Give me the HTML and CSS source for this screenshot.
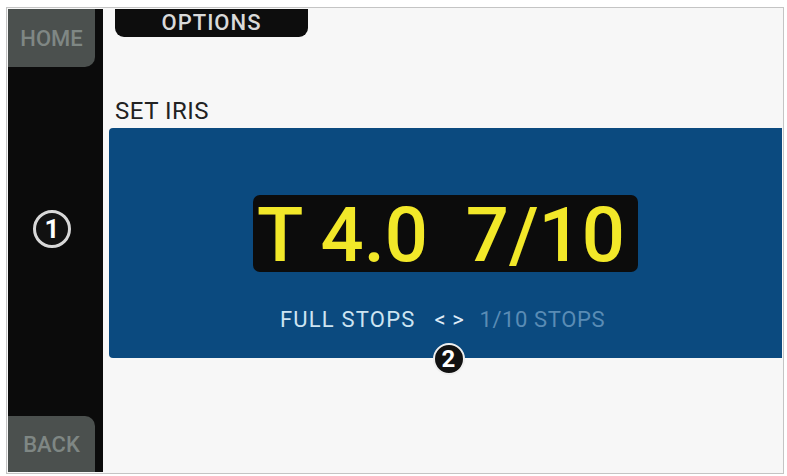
FILE: index.html
```html
<!DOCTYPE html>
<html lang="en">
<head>
  <meta charset="UTF-8">
  <title>Set Iris</title>
  <link rel="stylesheet" href="styles.css">
</head>
<body>
  <div class="screen">
    <!-- Soft keys on the left edge -->
    <aside class="side">
      <div class="soft-key home">HOME</div>
      <div class="marker marker-side">1</div>
      <div class="soft-key back">BACK</div>
    </aside>

    <main class="content">
      <div class="tab">OPTIONS</div>
      <div class="title">SET IRIS</div>

      <section class="panel">
        <div class="readout">T 4.0&nbsp;&nbsp;7/10</div>
        <div class="stops">
          <span class="on">FULL STOPS</span>
          <span class="arrows">&lt; &gt;</span>
          <span class="off">1/10 STOPS</span>
        </div>
        <div class="marker marker-panel">2</div>
      </section>
    </main>
  </div>
</body>
</html>
```

FILE: styles.css
```css
body {
  margin: 0;
  background: #ffffff;
  font-family: Roboto, "Liberation Sans", sans-serif;
}
.screen {
  box-sizing: border-box;
  display: flex;
  height: 467px;
  margin: 7px 3px 0 6px;
  padding: 1px;
  border: 1px solid #c4c4c4;
  background: #f7f7f7;
}

/* left column */
.side {
  width: 95px;
  flex-shrink: 0;
  display: flex;
  flex-direction: column;
  justify-content: space-between;
  align-items: flex-start;
  background: #0b0b0b;
}
.soft-key {
  width: 87px;
  height: 58px;
  display: flex;
  align-items: center;
  justify-content: center;
  background: #4b504e;
  color: #7f8784;
  font-size: 22px;
  font-weight: 500;
}
.home { border-bottom-right-radius: 10px; }
.back { height: 56px; border-top-right-radius: 10px; }

.marker {
  box-sizing: border-box;
  display: flex;
  align-items: center;
  justify-content: center;
  border-radius: 50%;
  background: #111111;
  border: 2px solid #eeeeee;
  color: #ffffff;
  font-weight: 700;
}
.marker-side {
  width: 38px;
  height: 38px;
  margin-left: 25px;
  margin-bottom: 26px;
  border: 3px solid #d8d8d8;
  font-size: 26px;
}
.marker-panel {
  position: absolute;
  left: calc(50% - 13px);
  bottom: -17px;
  width: 32px;
  height: 32px;
  font-size: 24px;
}

/* main area */
.content {
  flex: 1;
  display: flex;
  flex-direction: column;
  padding-left: 6px;
}
.tab {
  width: 193px;
  height: 28px;
  margin-left: 6px;
  background: #0d0d0d;
  border-radius: 0 0 9px 9px;
  color: #d9d9d9;
  font-size: 22px;
  font-weight: 500;
  line-height: 28px;
  text-align: center;
  letter-spacing: 1px;
}
.title {
  margin: 60px 0 3px 6px;
  color: #222222;
  font-size: 24px;
  line-height: 28px;
  letter-spacing: 0.5px;
}
.panel {
  position: relative;
  height: 230px;
  display: flex;
  flex-direction: column;
  align-items: center;
  background: #0b4a7f;
  border-radius: 4px 0 0 4px;
}
.readout {
  box-sizing: border-box;
  width: 385px;
  height: 77px;
  margin-top: 67px;
  padding: 4px 9px 0 0;
  background: #0c0c0c;
  border-radius: 7px;
  color: #f2e829;
  font-size: 76px;
  font-weight: 500;
  line-height: 73px;
  text-align: center;
}
.stops {
  display: flex;
  margin-top: 35px;
  margin-right: 6px;
  font-size: 22px;
  line-height: 26px;
  letter-spacing: 0.6px;
}
.on { color: #cde4f2; margin-right: 19px; letter-spacing: 1.2px; }
.arrows { color: #e0eef8; margin-right: 15px; }
.off { color: #5a8cb5; }
```
